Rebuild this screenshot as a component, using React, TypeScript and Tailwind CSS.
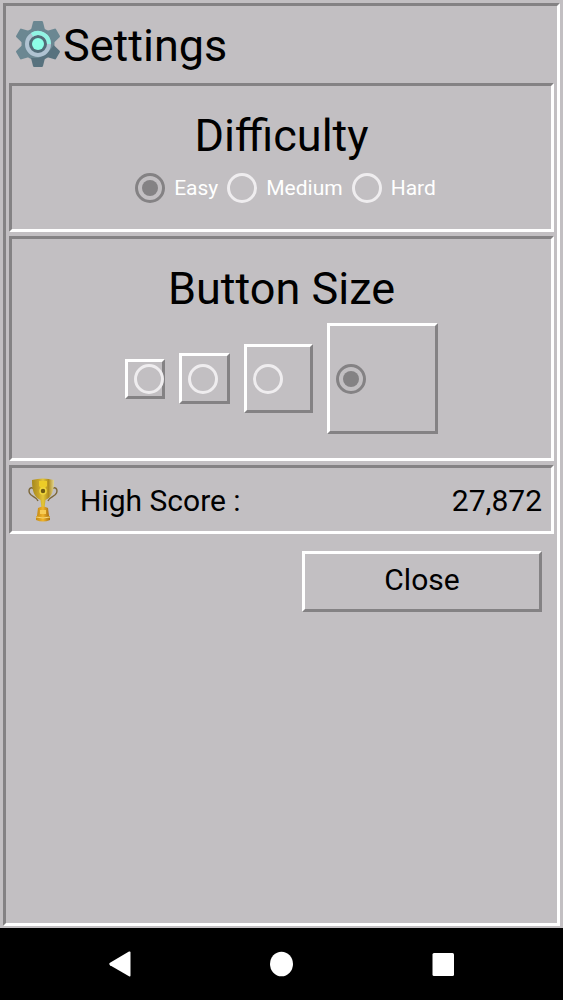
import { useState } from "react";

const difficulties = ["Easy", "Medium", "Hard"];

const buttonSizes = [
  { name: "Small", box: "size-[40px]" },
  { name: "Medium", box: "size-[51px]" },
  { name: "Large", box: "size-[69px]" },
  { name: "Extra large", box: "size-[111px]" },
];

const sunken =
  "border-3 border-t-[#848284] border-l-[#848284] border-r-white border-b-white";
const raised =
  "border-3 border-t-white border-l-white border-r-[#848284] border-b-[#848284]";
const radio =
  "grid size-[30px] shrink-0 appearance-none place-content-center rounded-full border-3 border-[#efedef] checked:border-[#848284] checked:before:size-4 checked:before:rounded-full checked:before:bg-[#848284]";

const GearIcon = () => (
  <svg width="46" height="48" viewBox="-23 -23 46 48" aria-hidden="true">
    <g fill="#6b8792">
      <circle r="16.500" />
      {[0, 60, 120, 180, 240, 300].map(angle => (
        <path
          key={angle}
          d="M-7-14L-5-22Q-4.800-23-3.800-23H3.800Q4.800-23 5-22L7-14Z"
          fill={angle === 120 || angle === 180 ? "#58727e" : "#6b8792"}
          transform={`rotate(${angle})`}
        />
      ))}
    </g>
    <path d="M9 9L16 2A16.500 16.500 0 0 1-3 16.200Z" fill="#58727e" />
    <circle r="11" fill="#526d79" stroke="#b0c3d2" strokeWidth="4" />
    <path d="M-6-9.200A11 11 0 0 1 11 0" fill="none" stroke="#91f4e4" strokeWidth="4" />
    <circle r="6" fill="#8dffe8" />
  </svg>
);

const TrophyIcon = () => (
  <svg width="30" height="46" viewBox="0 0 30 46" aria-hidden="true">
    <defs>
      <linearGradient id="gold">
        <stop offset="0" stopColor="#a78a1d" />
        <stop offset=".3" stopColor="#c7a429" />
        <stop offset=".5" stopColor="#e4c637" />
        <stop offset=".75" stopColor="#b08c1c" />
        <stop offset="1" stopColor="#e2d68f" />
      </linearGradient>
      <linearGradient id="base">
        <stop offset="0" stopColor="#c58a16" />
        <stop offset=".5" stopColor="#f0b52c" />
        <stop offset="1" stopColor="#a96f10" />
      </linearGradient>
    </defs>
    <g fill="none" stroke="#7c6738" strokeWidth="1.400">
      <path d="M6 12C3 9 0 12 1.500 16C3 20 9 20 10 24" />
      <path d="M24 12C27 9 30 12 28.500 16C27 20 21 20 20 24" />
    </g>
    <path
      d="M4 3Q15 0 26 3C26 14 24 20 17.500 23L16.500 31H13.500L12.500 23C6 20 4 14 4 3Z"
      fill="url(#gold)"
    />
    <path d="M11 4H19V9L17 11H13L11 9Z" fill="#edcc27" />
    <circle cx="15" cy="14" r="3" fill="#705b13" stroke="#f0d63b" strokeWidth="1.500" />
    <path d="M10 31Q15 28 20 31L21 39H9Z" fill="url(#base)" />
    <path d="M12 33H18V37H12Z" fill="#f7cc55" />
    <path d="M8 39H22V43Q15 46 8 43Z" fill="url(#base)" />
    <path d="M8 40Q15 42 22 40" fill="none" stroke="#f6d774" />
  </svg>
);

const NavigationBar = () => (
  <nav className="grid h-[72px] grid-cols-3 place-items-center bg-black px-10">
    <button aria-label="Back">
      <svg width="24" height="26" viewBox="0 0 24 26" fill="white">
        <path d="M20 .5Q21.500 0 21.500 1.500V24.500Q21.500 26 20 25.300L1 14.200Q-.5 13 1 11.800Z" />
      </svg>
    </button>
    <button aria-label="Home">
      <svg width="24" height="26" viewBox="0 0 24 26" fill="white">
        <ellipse cx="11.500" cy="13" rx="11.500" ry="12.300" />
      </svg>
    </button>
    <button aria-label="Recent apps">
      <svg width="24" height="26" viewBox="0 0 24 26" fill="white">
        <rect x="1.500" y="2" width="21.500" height="23" rx="1.500" />
      </svg>
    </button>
  </nav>
);

export default function App() {
  const [difficulty, setDifficulty] = useState("Easy");
  const [size, setSize] = useState("Extra large");

  return (
    <div className="flex min-h-screen flex-col bg-[#c2bfc2] font-[Roboto,sans-serif] text-black">
      <main className={`mx-[3px] mt-[3px] mb-0.5 flex flex-1 flex-col px-[3px] ${sunken}`}>
        <header className="flex h-[77px] items-center gap-0.5 pl-1.5">
          <GearIcon />
          <h1 className="pt-0.5 text-[45px] leading-[52px]">Settings</h1>
        </header>

        <div className="flex flex-col gap-1">
          <section className={`h-[149px] pt-6 ${sunken}`}>
            <h2 className="text-center text-[45px] leading-[52px]">Difficulty</h2>
            <div className="mt-[10px] flex justify-center gap-[9px] pl-2">
              {difficulties.map(name => (
                <label
                  key={name}
                  className="flex items-center gap-[9px] text-[21px] leading-8 text-white"
                >
                  <input
                    type="radio"
                    name="difficulty"
                    className={radio}
                    checked={difficulty === name}
                    onChange={() => setDifficulty(name)}
                  />
                  {name}
                </label>
              ))}
            </div>
          </section>

          <section className={`h-[225px] pt-6 ${sunken}`}>
            <h2 className="text-center text-[45px] leading-[52px]">Button Size</h2>
            <div className="mt-2 flex items-center justify-center gap-[14px]">
              {buttonSizes.map(({ name, box }) => (
                <label key={name} className={`flex items-center pl-1.5 ${box} ${raised}`}>
                  <input
                    type="radio"
                    name="size"
                    aria-label={name}
                    className={radio}
                    checked={size === name}
                    onChange={() => setSize(name)}
                  />
                </label>
              ))}
            </div>
          </section>

          <section
            className={`flex h-[69px] items-center pr-[9px] pl-4 text-[30px] leading-9 ${sunken}`}
          >
            <TrophyIcon />
            <p className="ml-[22px] pt-0.5">High Score :</p>
            <p className="ml-auto pt-0.5">27,872</p>
          </section>
        </div>

        <button
          className={`mt-[17px] mr-3 h-[61px] w-60 self-end pb-1 text-[30px] leading-9 ${raised}`}
        >
          Close
        </button>
      </main>
      <NavigationBar />
    </div>
  );
}
